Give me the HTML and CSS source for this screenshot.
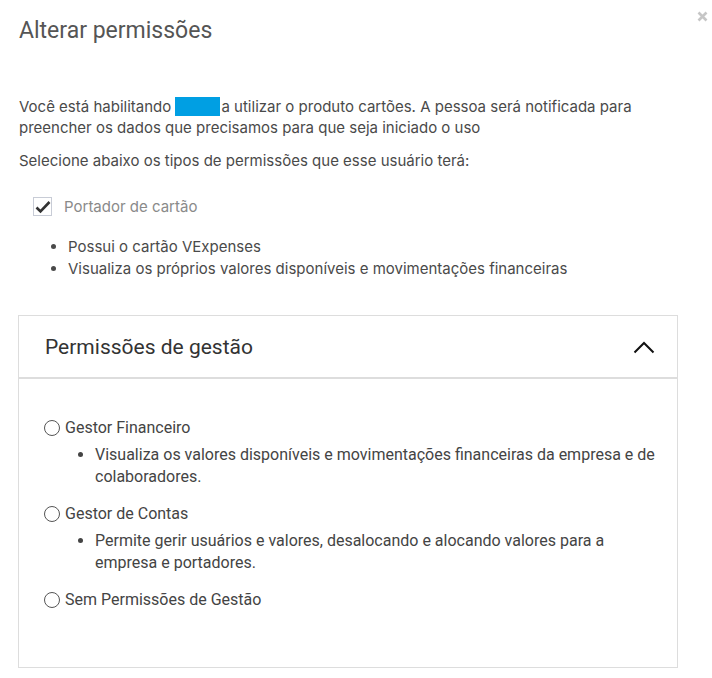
FILE: index.html
```html
<!DOCTYPE html>
<html>
<head>
    <meta charset="UTF-8">
    <title>Alterar permissões</title>
    <meta name="viewport" content="width=device-width, initial-scale=1.0">
    <link rel="stylesheet" href="styles.css">
</head>
<body>
    <div class="modal">
        <div class="modal-header">
            <h2>Alterar permissões</h2>
            <span class="close">
                <svg width="11" height="11" viewBox="0 0 11 11"><path d="M1.5 1.5 L9.5 9.5 M9.5 1.5 L1.5 9.5" stroke="#c6c6c6" stroke-width="2.6"/></svg>
            </span>
        </div>

        <div class="modal-body">
            <p>Você está habilitando <span class="user-name"></span>a utilizar o produto cartões. A pessoa será notificada para preencher os dados que precisamos para que seja iniciado o uso</p>
            <p>Selecione abaixo os tipos de permissões que esse usuário terá:</p>

            <label class="check">
                <span class="check-box">
                    <svg width="16" height="14" viewBox="0 0 16 14"><path d="M1.5 7.5 L5.5 11.5 L14.5 2" fill="none" stroke="#333" stroke-width="2.6"/></svg>
                </span>
                Portador de cartão
            </label>

            <ul class="perks">
                <li>Possui o cartão VExpenses</li>
                <li>Visualiza os próprios valores disponíveis e movimentações financeiras</li>
            </ul>

            <div class="panel">
                <div class="panel-heading">
                    <span>Permissões de gestão</span>
                    <svg width="22" height="14" viewBox="0 0 22 14"><path d="M1.5 12.5 L11 3 L20.5 12.5" fill="none" stroke="#111" stroke-width="2"/></svg>
                </div>
                <div class="panel-body">
                    <label class="radio"><span class="radio-dot"></span>Gestor Financeiro</label>
                    <ul class="perks">
                        <li>Visualiza os valores disponíveis e movimentações financeiras da empresa e de colaboradores.</li>
                    </ul>

                    <label class="radio"><span class="radio-dot"></span>Gestor de Contas</label>
                    <ul class="perks">
                        <li>Permite gerir usuários e valores, desalocando e alocando valores para a empresa e portadores.</li>
                    </ul>

                    <label class="radio"><span class="radio-dot"></span>Sem Permissões de Gestão</label>
                </div>
            </div>
        </div>
    </div>
</body>
</html>
```

FILE: styles.css
```css
body {
    margin: 0;
    background-color: #fff;
    font-family: Inter, "Noto Sans", sans-serif;
    color: #4a4a4a;
}
.modal {
    padding: 15px 34px 0 19px;
}
.modal-header {
    display: flex;
    justify-content: space-between;
    align-items: flex-start;
}
.modal-header h2 {
    margin: 0;
    font-family: Roboto, sans-serif;
    font-weight: 400;
    font-size: 23px;
    line-height: 32px;
    color: #555;
}
.close {
    margin: -4px -30px 0 0;
    line-height: 0;
}
.modal-body {
    padding-top: 49px;
}
.modal-body p {
    margin: 0 0 12px;
    font-size: 15px;
    line-height: 21px;
}
.user-name {
    display: inline-block;
    width: 45px;
    height: 19px;
    margin-right: 1px;
    vertical-align: -4px;
    background-color: #009fe3;
}
.check {
    display: flex;
    align-items: center;
    gap: 12px;
    margin: 26px 0 0 14px;
    font-size: 15px;
    color: #8a8a8a;
}
.check-box {
    display: flex;
    align-items: center;
    justify-content: center;
    width: 17px;
    height: 17px;
    border: 1px solid #c8ccd6;
}
.perks {
    margin: 20px 0 0;
    padding-left: 49px;
    font-size: 15px;
    line-height: 22px;
}
.panel {
    margin: 35px 0 12px -1px;
    border: 1px solid #ddd;
}
.panel-heading {
    display: flex;
    justify-content: space-between;
    align-items: center;
    height: 61px;
    padding: 0 22px 0 26px;
    border-bottom: 2px solid #ddd;
    font-family: Roboto, sans-serif;
    font-size: 21px;
    color: #333;
}
.panel-body {
    padding: 38px 20px 56px 25px;
    font-family: Roboto, sans-serif;
    font-size: 16px;
    color: #444;
}
.radio {
    display: flex;
    align-items: center;
    gap: 5px;
    line-height: 22px;
}
.radio-dot {
    width: 14px;
    height: 14px;
    border: 1px solid #555;
    border-radius: 50%;
}
.panel-body .perks {
    margin: 5px 0 15px;
    padding-left: 51px;
    font-size: 16px;
}
```
